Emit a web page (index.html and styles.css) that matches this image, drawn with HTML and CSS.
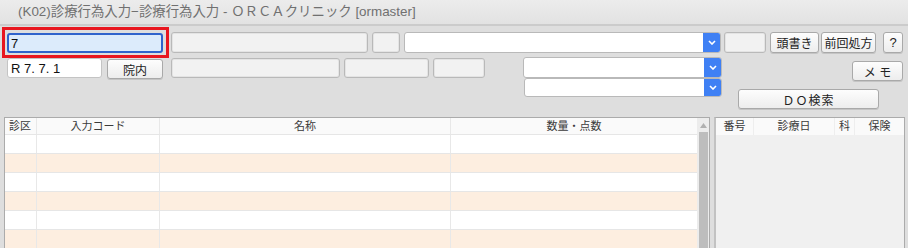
FILE: index.html
```html
<!DOCTYPE html>
<html lang="ja">
<head>
    <meta charset="UTF-8">
    <title>診療行為入力</title>
    <link rel="stylesheet" href="styles.css">
</head>
<body>
    <div class="title-bar">(K02)診療行為入力−診療行為入力 - ＯＲＣＡクリニック [ormaster]</div>

    <div class="form">
        <div class="row row-a">
            <div class="focus-ring">
                <input type="text" class="field field-focus" value="7">
            </div>
            <div class="field field-off w197"></div>
            <div class="field field-off w28"></div>
            <div class="combo w317"><span class="combo-btn"><svg width="8" height="5" viewBox="0 0 8 5"><path d="M1 1l3 3 3-3" fill="none" stroke="#fff" stroke-width="1.6"/></svg></span></div>
            <div class="field field-off w42"></div>
            <button class="btn w49">頭書き</button>
            <button class="btn w55">前回処方</button>
            <button class="btn w20 btn-help">?</button>
        </div>

        <div class="row row-b">
            <input type="text" class="field field-date" value="R 7. 7. 1">
            <button class="btn btn-in">院内</button>
            <div class="field field-off w169"></div>
            <div class="field field-off w85"></div>
            <div class="field field-off w52"></div>
            <div class="combo w199 combo-b"><span class="combo-btn"><svg width="8" height="5" viewBox="0 0 8 5"><path d="M1 1l3 3 3-3" fill="none" stroke="#fff" stroke-width="1.6"/></svg></span></div>
            <button class="btn btn-memo">メ モ</button>
        </div>

        <div class="row row-c">
            <div class="combo w198 combo-c"><span class="combo-btn"><svg width="8" height="5" viewBox="0 0 8 5"><path d="M1 1l3 3 3-3" fill="none" stroke="#fff" stroke-width="1.6"/></svg></span></div>
            <button class="btn btn-do">ＤＯ検索</button>
        </div>
    </div>

    <div class="tables">
        <div class="panel panel-main">
            <div class="grid">
                <div class="grid-head">
                    <div class="c1">診区</div>
                    <div class="c2">入力コード</div>
                    <div class="c3">名称</div>
                    <div class="c4">数量・点数</div>
                </div>
                <div class="grid-row"><div class="c1"></div><div class="c2"></div><div class="c3"></div><div class="c4"></div></div>
                <div class="grid-row alt"><div class="c1"></div><div class="c2"></div><div class="c3"></div><div class="c4"></div></div>
                <div class="grid-row"><div class="c1"></div><div class="c2"></div><div class="c3"></div><div class="c4"></div></div>
                <div class="grid-row alt"><div class="c1"></div><div class="c2"></div><div class="c3"></div><div class="c4"></div></div>
                <div class="grid-row"><div class="c1"></div><div class="c2"></div><div class="c3"></div><div class="c4"></div></div>
                <div class="grid-row alt"><div class="c1"></div><div class="c2"></div><div class="c3"></div><div class="c4"></div></div>
            </div>
            <div class="scrollbar">
                <div class="scroll-up"><svg width="7" height="5" viewBox="0 0 7 5"><path d="M0 5L3.5 0 7 5z" fill="#b0b0b0"/></svg></div>
                <div class="scroll-thumb"></div>
            </div>
        </div>

        <div class="panel panel-side">
            <div class="side-head">
                <div class="s1">番号</div>
                <div class="s2">診療日</div>
                <div class="s3">科</div>
                <div class="s4">保険</div>
            </div>
        </div>
    </div>
</body>
</html>
```

FILE: styles.css
```css
body {
    margin: 0;
    background-color: #dedede;
    font-family: "Liberation Sans", "Noto Sans CJK JP", sans-serif;
    color: #333;
    overflow: hidden;
    height: 248px;
}

.title-bar {
    box-sizing: border-box;
    height: 26px;
    line-height: 24px;
    padding-left: 18px;
    font-size: 13.4px;
    color: #707070;
    background: linear-gradient(#ececec, #e2e2e2);
    border-bottom: 2px solid #cbcbcb;
}

.form {
    padding-top: 1px;
}

.row {
    display: flex;
    align-items: center;
}

.row-a {
    height: 31px;
    padding-left: 2px;
}

.row-b {
    height: 20px;
    padding-left: 7px;
    align-items: flex-start;
}

.row-c {
    padding-left: 524px;
    align-items: flex-start;
}

.focus-ring {
    width: 167px;
    height: 31px;
    box-sizing: border-box;
    border: 3px solid #e8161f;
    padding: 3px 3px 2px 2px;
}

.field {
    box-sizing: border-box;
    height: 21px;
    border: 1px solid #b9b9b9;
    border-radius: 3px;
    margin: 0;
    font-family: "Liberation Sans", "Noto Sans CJK JP", sans-serif;
    font-size: 13px;
    color: #111;
}

.field-focus {
    width: 156px;
    height: 20px;
    background-color: #dcebfb;
    border: 2px solid #2f63cc;
    padding: 0 2px;
    outline: none;
}

.field-off {
    background-color: #f2f2f2;
    box-shadow: inset 0 0 0 1px #e4e4e4;
    margin-left: 4px;
}

.field-date {
    width: 95px;
    height: 20px;
    background-color: #fff;
    border-color: #c4c4c4;
    padding: 0 3px;
    outline: none;
}

.w197 { width: 197px; margin-left: 2px; }
.w28 { width: 28px; }
.w42 { width: 42px; margin-left: 3px; }
.w169 { width: 169px; margin-left: 8px; height: 20px; }
.w85 { width: 85px; height: 20px; }
.w52 { width: 52px; height: 20px; }

.combo {
    box-sizing: border-box;
    height: 21px;
    background-color: #fff;
    border: 1px solid #b9b9b9;
    border-radius: 3px;
    display: flex;
    justify-content: flex-end;
    margin-left: 4px;
    overflow: hidden;
}

.w317 { width: 317px; }
.w199 { width: 199px; }
.w198 { width: 198px; }

.combo-b {
    height: 21px;
    margin-left: 38px;
    margin-top: -1px;
}

.combo-c {
    height: 19px;
    margin-left: 0;
}

.combo-btn {
    width: 17px;
    background-color: #3f80f4;
    display: flex;
    align-items: center;
    justify-content: center;
}

.btn {
    box-sizing: border-box;
    height: 21px;
    padding: 0;
    background: linear-gradient(#fdfdfd, #ededed);
    border: 1px solid #a9a9a9;
    border-radius: 3px;
    box-shadow: 0 1px 0 #c4c4c4;
    font-family: "Liberation Sans", "Noto Sans CJK JP", sans-serif;
    font-size: 12px;
    color: #222;
    cursor: pointer;
}

.w49 { width: 49px; margin-left: 4px; }
.w55 { width: 55px; margin-left: 2px; }
.w20 { width: 20px; margin-left: 7px; }

.btn-help {
    font-size: 13px;
}

.btn-in {
    width: 56px;
    height: 20px;
    margin-left: 5px;
    margin-top: 1px;
}

.btn-memo {
    width: 51px;
    height: 20px;
    margin-left: 130px;
    margin-top: 3px;
}

.btn-do {
    width: 141px;
    height: 20px;
    margin-left: 16px;
    margin-top: 11px;
    letter-spacing: 1px;
}

.tables {
    display: flex;
    margin-top: 8px;
    padding-left: 4px;
    height: 140px;
}

.panel {
    box-sizing: border-box;
    border: 1px solid #ababab;
    border-bottom: none;
}

.panel-main {
    width: 706px;
    display: flex;
    background-color: #fff;
}

.grid {
    flex: 1;
}

.grid-head,
.grid-row {
    display: flex;
    border-bottom: 1px solid #e6e6e6;
}

.grid-head {
    height: 16px;
    background-color: #fafafa;
    font-size: 11px;
    line-height: 16px;
    color: #3a3a3a;
}

.grid-row {
    height: 18px;
}

.grid-row.alt {
    background-color: #fdeee0;
}

.grid-head > div,
.grid-row > div {
    box-sizing: border-box;
    border-right: 1px solid #e8e8e8;
    text-align: center;
}

.c1 { width: 32px; }
.c2 { width: 123px; }
.c3 { width: 291px; }
.c4 { flex: 1; }

.grid-head > .c4,
.grid-row > .c4 {
    border-right: none;
}

.grid-head > .c1 {
    text-align: left;
    padding-left: 4px;
}

.scrollbar {
    width: 12px;
    background-color: #ececec;
    display: flex;
    flex-direction: column;
    align-items: center;
}

.scroll-up {
    height: 14px;
    display: flex;
    align-items: center;
}

.scroll-thumb {
    width: 9px;
    flex: 1;
    background-color: #bdbdbd;
}

.panel-side {
    width: 191px;
    margin-left: 4px;
    background-color: #f0f0f0;
    border-left: 2px solid #c2c2c2;
}

.side-head {
    display: flex;
    height: 17px;
    background-color: #fafafa;
    font-size: 11px;
    line-height: 17px;
    color: #3a3a3a;
}

.side-head > div {
    box-sizing: border-box;
    text-align: center;
    border-right: 1px solid #eeeeee;
}

.s1 { width: 38px; }
.s2 { width: 81px; }
.s3 { width: 20px; }
.s4 { flex: 1; border-right: none !important; }
```
